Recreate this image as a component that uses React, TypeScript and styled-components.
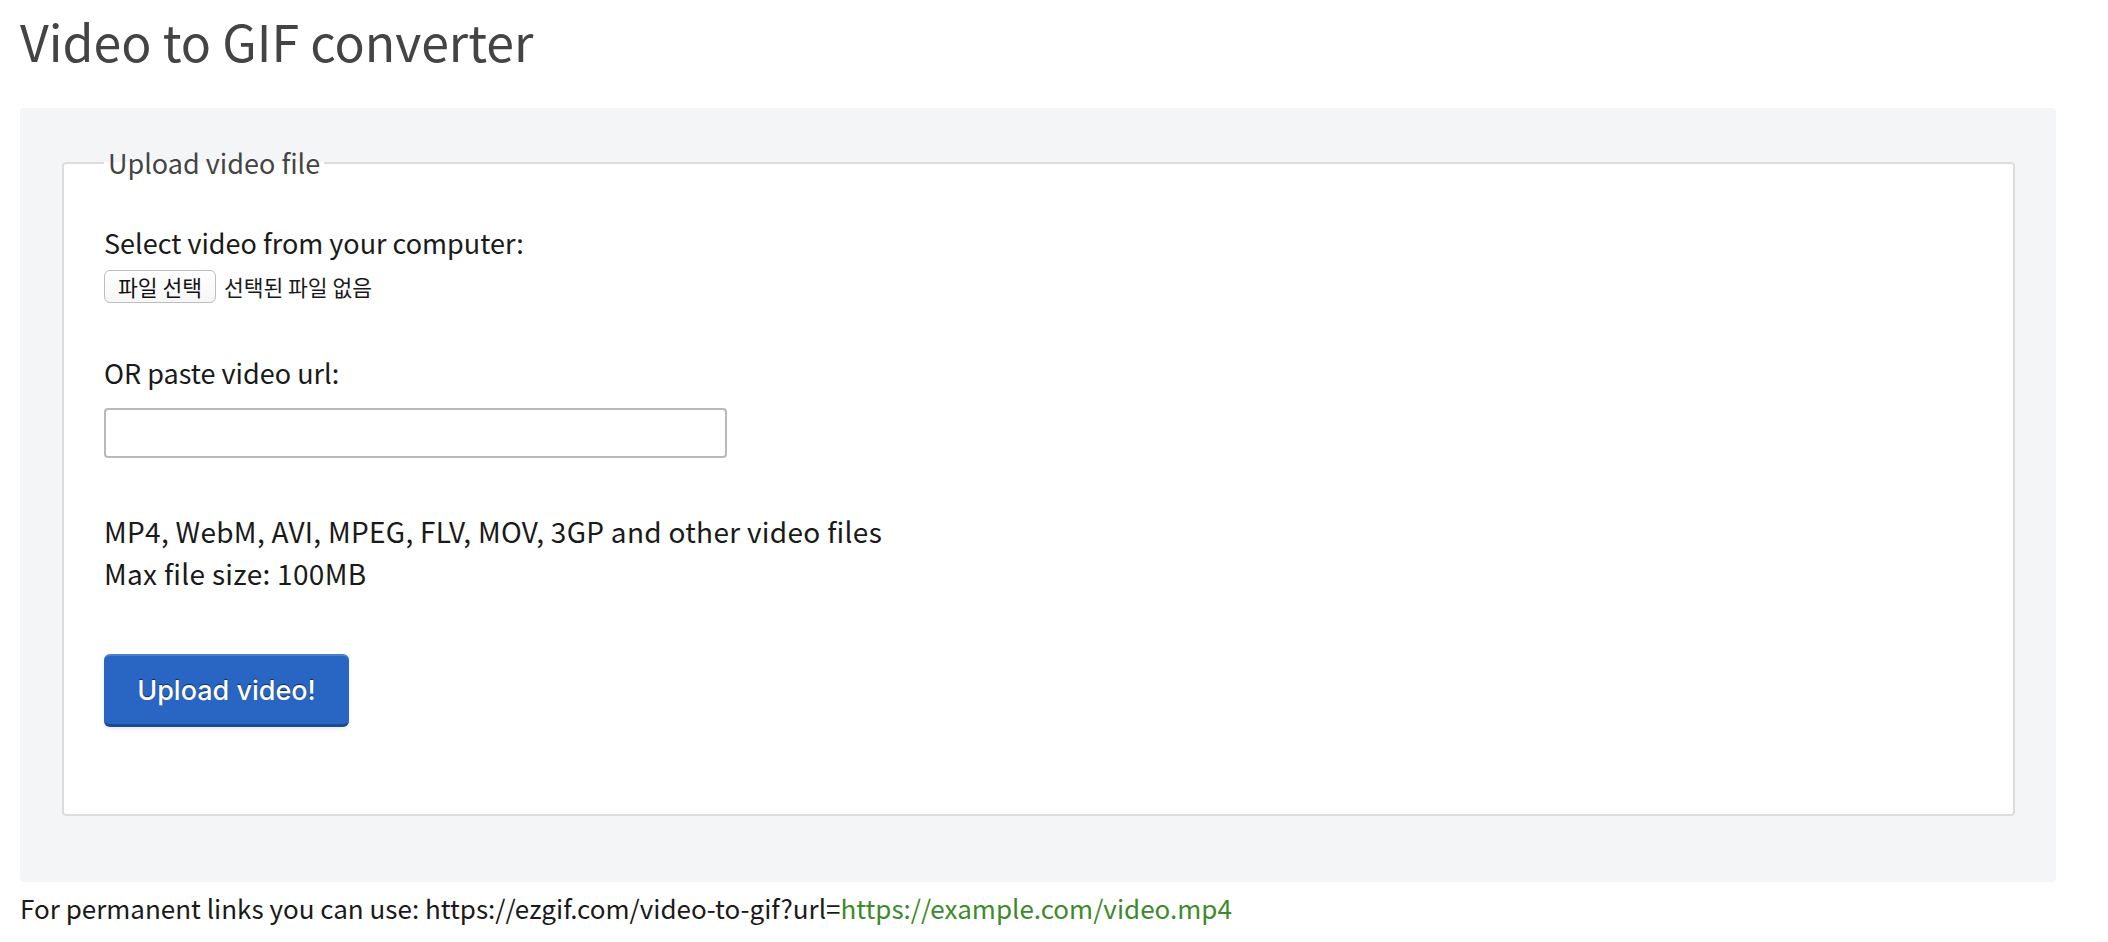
import { createGlobalStyle, styled } from 'styled-components';

const GlobalStyle = createGlobalStyle`
  body {
    margin: 0;
    background: #fff;
    color: #1a1a1a;
    font-family: 'Noto Sans CJK KR', 'Noto Sans', sans-serif;
    font-size: 27px;
  }
`;

const Page = styled.div`
  padding: 0 52px 0 20px;
`;

const Title = styled.h1`
  margin: 0;
  padding: 5px 0 33px;
  font-size: 50px;
  font-weight: 400;
  line-height: 70px;
  color: #444;
`;

const Panel = styled.div`
  background: #f4f5f7;
  border-radius: 4px;
  padding: 35px 41px 66px 42px;
`;

const Fieldset = styled.fieldset`
  margin: 0;
  padding: 0 40px 87px;
  border: 2px solid #dcdcdc;
  border-radius: 4px;
  background: #fff;
`;

const Legend = styled.legend`
  padding: 0 4px;
  font-size: 27px;
  line-height: 40px;
  color: #444;
`;

const Label = styled.div<{ $top: number }>`
  margin-top: ${(p) => p.$top}px;
  line-height: 40px;
`;

const FileRow = styled.div`
  display: flex;
  align-items: center;
  gap: 8px;
  margin-top: 7px;
  font-size: 21.5px;
`;

const FileButton = styled.span`
  display: inline-flex;
  align-items: center;
  height: 33px;
  padding: 0 13px;
  box-sizing: border-box;
  border: 1px solid #bdbdbd;
  border-radius: 6px;
  background: linear-gradient(#fff, #f6f6f6);
  color: #111;
`;

const UrlInput = styled.input`
  display: block;
  box-sizing: border-box;
  width: 623px;
  height: 50px;
  margin-top: 15px;
  border: 2px solid #b9b9b9;
  border-radius: 4px;
  font: inherit;
`;

const Info = styled.div`
  margin-top: 52px;
  font-size: 28px;
  letter-spacing: 0.3px;
  line-height: 42px;
`;

const UploadButton = styled.button`
  display: block;
  margin-top: 60px;
  width: 245px;
  height: 73px;
  border: 0;
  border-bottom: 3px solid #1c4a94;
  border-top: 2px solid #4a80d2;
  border-radius: 6px;
  background: #2966c4;
  color: #fff;
  font-family: Inter, 'Noto Sans', sans-serif;
  font-size: 27px;
  font-weight: 500;
  text-shadow: 0 -1px 1px rgba(0, 0, 0, 0.6);
  box-shadow: 0 2px 4px rgba(0, 0, 0, 0.08);
`;

const Footer = styled.p`
  margin: 6px 0 0;
  font-size: 26px;
  line-height: 40px;
`;

const Link = styled.a`
  color: #3d8a2c;
  text-decoration: none;
`;

export default function App() {
  return (
    <Page>
      <GlobalStyle />
      <Title>Video to GIF converter</Title>
      <Panel>
        <Fieldset>
          <Legend>Upload video file</Legend>
          <Label $top={40}>Select video from your computer:</Label>
          <FileRow>
            <FileButton>파일 선택</FileButton>
            <span>선택된 파일 없음</span>
          </FileRow>
          <Label $top={50}>OR paste video url:</Label>
          <UrlInput type="text" />
          <Info>
            MP4, WebM, AVI, MPEG, FLV, MOV, 3GP and other video files
            <br />
            Max file size: 100MB
          </Info>
          <UploadButton>Upload video!</UploadButton>
        </Fieldset>
      </Panel>
      <Footer>
        For permanent links you can use: https://ezgif.com/video-to-gif?url=
        <Link href="#">https://example.com/video.mp4</Link>
      </Footer>
    </Page>
  );
}
